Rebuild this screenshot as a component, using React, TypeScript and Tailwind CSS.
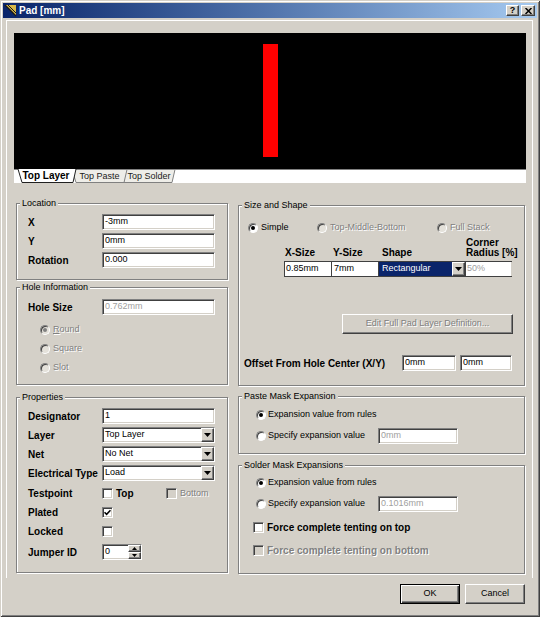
import React from 'react';

const sunken =
  'border border-t-[#808080] border-l-[#808080] border-b-white border-r-white shadow-[inset_1px_1px_#404040,inset_-1px_-1px_#d4d0c8]';
const raised =
  'border border-t-white border-l-white border-b-[#404040] border-r-[#404040] shadow-[inset_-1px_-1px_#808080]';
const etched = 'border border-[#808080] shadow-[inset_1px_1px_#fff,1px_1px_#fff]';
const grayText = 'text-[#808080] [text-shadow:1px_1px_0_#fff]';

const Group: React.FC<{ label: string; className: string; children?: React.ReactNode }> = ({
  label,
  className,
  children
}) => (
  <div className={`${etched} flex flex-col ${className}`}>
    <div className="-mt-[6px] ml-[3px] px-[2px] w-fit bg-[#d4d0c8] leading-[11px]">{label}</div>
    {children}
  </div>
);

const TextBox: React.FC<{ value: string; className: string; disabled?: boolean }> = ({
  value,
  className,
  disabled
}) => (
  <div className={`${sunken} h-[16px] bg-white flex items-center pl-[2px] ${disabled ? 'text-[#a0a0a0]' : 'text-black'} ${className}`}>
    {value}
  </div>
);

const DownArrow = () => (
  <svg width="7" height="4" viewBox="0 0 7 4">
    <polygon points="0,0 7,0 3.5,4" fill="#000" />
  </svg>
);

const Select: React.FC<{ value: string }> = ({ value }) => (
  <div className={`${sunken} h-[16px] w-[113px] bg-white flex items-stretch`}>
    <div className="flex-1 flex items-center pl-[2px]">{value}</div>
    <div className={`${raised} w-[13px] bg-[#d4d0c8] flex items-center justify-center`}>
      <DownArrow />
    </div>
  </div>
);

const Radio: React.FC<{ checked?: boolean; disabled?: boolean }> = ({ checked, disabled }) => (
  <span
    className={`w-[10px] h-[10px] shrink-0 rounded-full border border-t-[#808080] border-l-[#808080] border-b-white border-r-white shadow-[inset_1px_1px_#404040] flex items-center justify-center ${
      disabled ? 'bg-[#e4e1da]' : 'bg-white'
    }`}
  >
    {checked && <span className={`w-[4px] h-[4px] rounded-full ${disabled ? 'bg-[#808080]' : 'bg-black'}`} />}
  </span>
);

const Check: React.FC<{ checked?: boolean; disabled?: boolean }> = ({ checked, disabled }) => (
  <span className={`${sunken} w-[11px] h-[11px] shrink-0 flex items-center justify-center ${disabled ? 'bg-[#d4d0c8]' : 'bg-white'}`}>
    {checked && (
      <svg width="7" height="7" viewBox="0 0 7 7">
        <path d="M0.5 3.2 L2.6 5.3 L6.5 1.2" stroke="#000" strokeWidth="1.6" fill="none" />
      </svg>
    )}
  </span>
);

const Row: React.FC<{ label: string; children?: React.ReactNode; className?: string }> = ({
  label,
  children,
  className = 'h-[16px]'
}) => (
  <div className={`flex items-center ${className}`}>
    <div className="w-[74px] font-bold text-[10px] whitespace-nowrap">{label}</div>
    {children}
  </div>
);

const TabStrip = () => (
  <div className="relative h-[14px] bg-white">
    <svg className="absolute inset-0" width="512" height="14" viewBox="0 0 512 14">
      <polygon points="106,0.5 161,0.5 158,13.5 110,13.5" fill="#eeede8" stroke="#808080" />
      <polygon points="58,0.5 113,0.5 110,13.5 62,13.5" fill="#eeede8" stroke="#808080" />
      <line x1="0" y1="0.5" x2="4" y2="0.5" stroke="#808080" />
      <line x1="161" y1="0.5" x2="512" y2="0.5" stroke="#808080" />
      <polygon points="4,0 62,0 59,13.5 8,13.5" fill="#fff" />
      <polyline points="4,0 8,13.5 59,13.5 62,0" fill="none" stroke="#202020" />
    </svg>
    <div className="relative flex h-[14px] leading-[14px] pl-[4px]">
      <div className="w-[58px] text-center font-bold text-[10px] pr-[2px]">Top Layer</div>
      <div className="w-[51px] text-center text-[#202020] pr-[4px]">Top Paste</div>
      <div className="w-[48px] text-center text-[#202020] pr-[4px]">Top Solder</div>
    </div>
  </div>
);

const DisabledRadioRow: React.FC<{ children: React.ReactNode; checked?: boolean }> = ({ children, checked }) => (
  <div className="h-[19px] flex items-center gap-[3px]">
    <Radio checked={checked} disabled />
    <span className={grayText}>{children}</span>
  </div>
);

export default function App() {
  return (
    <div className="w-[540px] h-[617px] p-[3px] bg-[#d4d0c8] text-[9px] text-black font-['Liberation_Sans',Arial,sans-serif] shadow-[inset_1px_1px_#d4d0c8,inset_-1px_-1px_#404040,inset_2px_2px_#fff,inset_-2px_-2px_#808080] flex flex-col">
      {/* title bar */}
      <div className="h-[15px] flex items-center bg-linear-to-r from-[#0a246a] to-[#a6caf0]">
        <svg className="ml-[1px]" width="13" height="13" viewBox="0 0 13 13">
          <polygon points="1,1 12,1 12,12" fill="#d8b848" />
          <line x1="1" y1="1" x2="12" y2="12" stroke="#1a1a1a" strokeWidth="1.4" />
          <line x1="4" y1="1" x2="12" y2="9" stroke="#1a1a1a" strokeWidth="1" />
        </svg>
        <span className="ml-[2px] text-white font-bold text-[10px]">Pad [mm]</span>
        <div className="ml-auto mr-[2px] flex gap-[2px]">
          <div className={`${raised} w-[13px] h-[11px] bg-[#d4d0c8] flex items-center justify-center font-bold text-[9px] leading-none`}>?</div>
          <div className={`${raised} w-[14px] h-[11px] bg-[#d4d0c8] flex items-center justify-center`}>
            <svg width="7" height="6" viewBox="0 0 7 6">
              <path d="M0.5 0 L6.5 6 M6.5 0 L0.5 6" stroke="#000" strokeWidth="1.5" />
            </svg>
          </div>
        </div>
      </div>

      {/* tab page */}
      <div className="mt-[2px] ml-[3px] w-[527px] h-[558px] border-l border-t border-r border-white">
        <div className="ml-[7px] mt-[12px] w-[512px]">
          <div className="h-[136px] bg-black pl-[249px] pt-[11px]">
            <div className="w-[15px] h-[113px] bg-[#ff0000]" />
          </div>
          <TabStrip />
        </div>

        <div className="flex items-start ml-[9px] gap-[10px]">
          {/* left column */}
          <div className="w-[212px] mt-[20px] flex flex-col">
            <Group label="Location" className="h-[77px]">
              <div className="mt-[5px] pl-[11px] flex flex-col gap-[3px]">
                <Row label="X">
                  <TextBox value="-3mm" className="w-[113px]" />
                </Row>
                <Row label="Y">
                  <TextBox value="0mm" className="w-[113px]" />
                </Row>
                <Row label="Rotation">
                  <TextBox value="0.000" className="w-[113px]" />
                </Row>
              </div>
            </Group>

            <Group label="Hole Information" className="h-[98px] mt-[7px]">
              <div className="mt-[6px] pl-[11px]">
                <Row label="Hole Size">
                  <TextBox value="0.762mm" className="w-[113px]" disabled />
                </Row>
              </div>
              <div className="mt-[5px] pl-[23px] flex flex-col">
                <DisabledRadioRow checked>
                  <u>R</u>ound
                </DisabledRadioRow>
                <DisabledRadioRow>Square</DisabledRadioRow>
                <DisabledRadioRow>Slot</DisabledRadioRow>
              </div>
            </Group>

            <Group label="Properties" className="h-[176px] mt-[12px]">
              <div className="mt-[5px] pl-[11px] flex flex-col gap-[3px]">
                <Row label="Designator">
                  <TextBox value="1" className="w-[113px]" />
                </Row>
                <Row label="Layer">
                  <Select value="Top Layer" />
                </Row>
                <Row label="Net">
                  <Select value="No Net" />
                </Row>
                <Row label="Electrical Type">
                  <Select value="Load" />
                </Row>
              </div>
              <div className="mt-[3px] pl-[11px] flex flex-col">
                <Row label="Testpoint" className="h-[19px]">
                  <span className="w-[64px] flex items-center gap-[3px]">
                    <Check />
                    <span className="font-bold text-[10px]">Top</span>
                  </span>
                  <span className="flex items-center gap-[3px]">
                    <Check disabled />
                    <span className={grayText}>Bottom</span>
                  </span>
                </Row>
                <Row label="Plated" className="h-[19px]">
                  <Check checked />
                </Row>
                <Row label="Locked" className="h-[19px]">
                  <Check />
                </Row>
                <Row label="Jumper ID" className="h-[16px] mt-[3px]">
                  <div className={`${sunken} h-[16px] w-[40px] bg-white flex items-stretch`}>
                    <div className="flex-1 flex items-center pl-[2px]">0</div>
                    <div className="w-[13px] flex flex-col">
                      <div className={`${raised} flex-1 bg-[#d4d0c8] flex items-center justify-center`}>
                        <svg width="5" height="3" viewBox="0 0 5 3">
                          <polygon points="0,3 5,3 2.5,0" fill="#000" />
                        </svg>
                      </div>
                      <div className={`${raised} flex-1 bg-[#d4d0c8] flex items-center justify-center`}>
                        <svg width="5" height="3" viewBox="0 0 5 3">
                          <polygon points="0,0 5,0 2.5,3" fill="#000" />
                        </svg>
                      </div>
                    </div>
                  </div>
                </Row>
              </div>
            </Group>
          </div>

          {/* right column */}
          <div className="w-[287px] mt-[22px] flex flex-col">
            <Group label="Size and Shape" className="h-[181px]">
              <div className="mt-[10px] h-[14px] pl-[9px] flex items-center">
                <span className="w-[69px] flex items-center gap-[3px]">
                  <Radio checked />
                  <span>Simple</span>
                </span>
                <span className="w-[120px] flex items-center gap-[3px]">
                  <Radio disabled />
                  <span className={grayText}>Top-Middle-Bottom</span>
                </span>
                <span className="flex items-center gap-[3px]">
                  <Radio disabled />
                  <span className={grayText}>Full Stack</span>
                </span>
              </div>

              <div className="mt-[3px] ml-[45px] h-[20px] grid grid-cols-[47px_47px_87px_47px] items-end font-bold text-[10px] leading-[10px] whitespace-nowrap">
                <div className="pl-[1px]">X-Size</div>
                <div className="pl-[2px]">Y-Size</div>
                <div className="pl-[4px]">Shape</div>
                <div className="pl-[1px]">
                  Corner
                  <br />
                  Radius [%]
                </div>
              </div>

              <div className="mt-[3px] ml-[45px] h-[16px] w-[228px] flex border-t border-l border-b border-[#404040]">
                <div className="w-[47px] bg-white border-r border-[#404040] flex items-center pl-[1px]">0.85mm</div>
                <div className="w-[47px] bg-white border-r border-[#404040] flex items-center pl-[2px]">7mm</div>
                <div className="w-[87px] bg-[#0a246a] text-white border-r border-[#404040] flex items-stretch">
                  <div className="flex-1 flex items-center pl-[3px]">Rectangular</div>
                  <div className={`${raised} w-[13px] bg-[#d4d0c8] flex items-center justify-center`}>
                    <DownArrow />
                  </div>
                </div>
                <div className="flex-1 bg-white border-r border-[#d4d0c8] flex items-center pl-[1px] text-[#a0a0a0]">50%</div>
              </div>

              <div className={`${raised} mt-[37px] ml-[103px] w-[171px] h-[20px] flex items-center justify-center`}>
                <span className={grayText}>Edit Full Pad Layer Definition...</span>
              </div>

              <div className="mt-[21px] pl-[5px] h-[16px] flex items-center">
                <span className="w-[158px] font-bold text-[10px]">Offset From Hole Center (X/Y)</span>
                <TextBox value="0mm" className="w-[54px]" />
                <TextBox value="0mm" className="w-[52px] ml-[4px]" />
              </div>
            </Group>

            <Group label="Paste Mask Expansion" className="h-[58px] mt-[10px]">
              <div className="mt-[2px] pl-[17px] flex flex-col">
                <div className="h-[21px] flex items-center gap-[2px]">
                  <Radio checked />
                  <span>Expansion value from rules</span>
                </div>
                <div className="h-[21px] flex items-center">
                  <span className="w-[122px] flex items-center gap-[2px]">
                    <Radio />
                    <span>Specify expansion value</span>
                  </span>
                  <TextBox value="0mm" className="w-[80px]" disabled />
                </div>
              </div>
            </Group>

            <Group label="Solder Mask Expansions" className="h-[109px] mt-[11px]">
              <div className="mt-[1px] pl-[17px] flex flex-col">
                <div className="h-[21px] flex items-center gap-[2px]">
                  <Radio checked />
                  <span>Expansion value from rules</span>
                </div>
                <div className="h-[21px] flex items-center">
                  <span className="w-[122px] flex items-center gap-[2px]">
                    <Radio />
                    <span>Specify expansion value</span>
                  </span>
                  <TextBox value="0.1016mm" className="w-[80px]" disabled />
                </div>
              </div>
              <div className="mt-[2px] pl-[14px] flex flex-col">
                <div className="h-[22px] flex items-center gap-[3px]">
                  <Check />
                  <span className="font-bold text-[10px]">Force complete tenting on top</span>
                </div>
                <div className="h-[24px] flex items-center gap-[3px]">
                  <Check disabled />
                  <span className={`font-bold text-[10px] ${grayText}`}>Force complete tenting on bottom</span>
                </div>
              </div>
            </Group>
          </div>
        </div>
      </div>

      {/* dialog buttons */}
      <div className="mt-[6px] flex justify-end gap-[5px] pr-[12px]">
        <div className="w-[60px] h-[20px] border border-black shadow-[inset_1px_1px_#fff,inset_-1px_-1px_#404040,inset_-2px_-2px_#808080] flex items-center justify-center">
          OK
        </div>
        <div className={`${raised} w-[60px] h-[20px] flex items-center justify-center`}>Cancel</div>
      </div>
    </div>
  );
}
